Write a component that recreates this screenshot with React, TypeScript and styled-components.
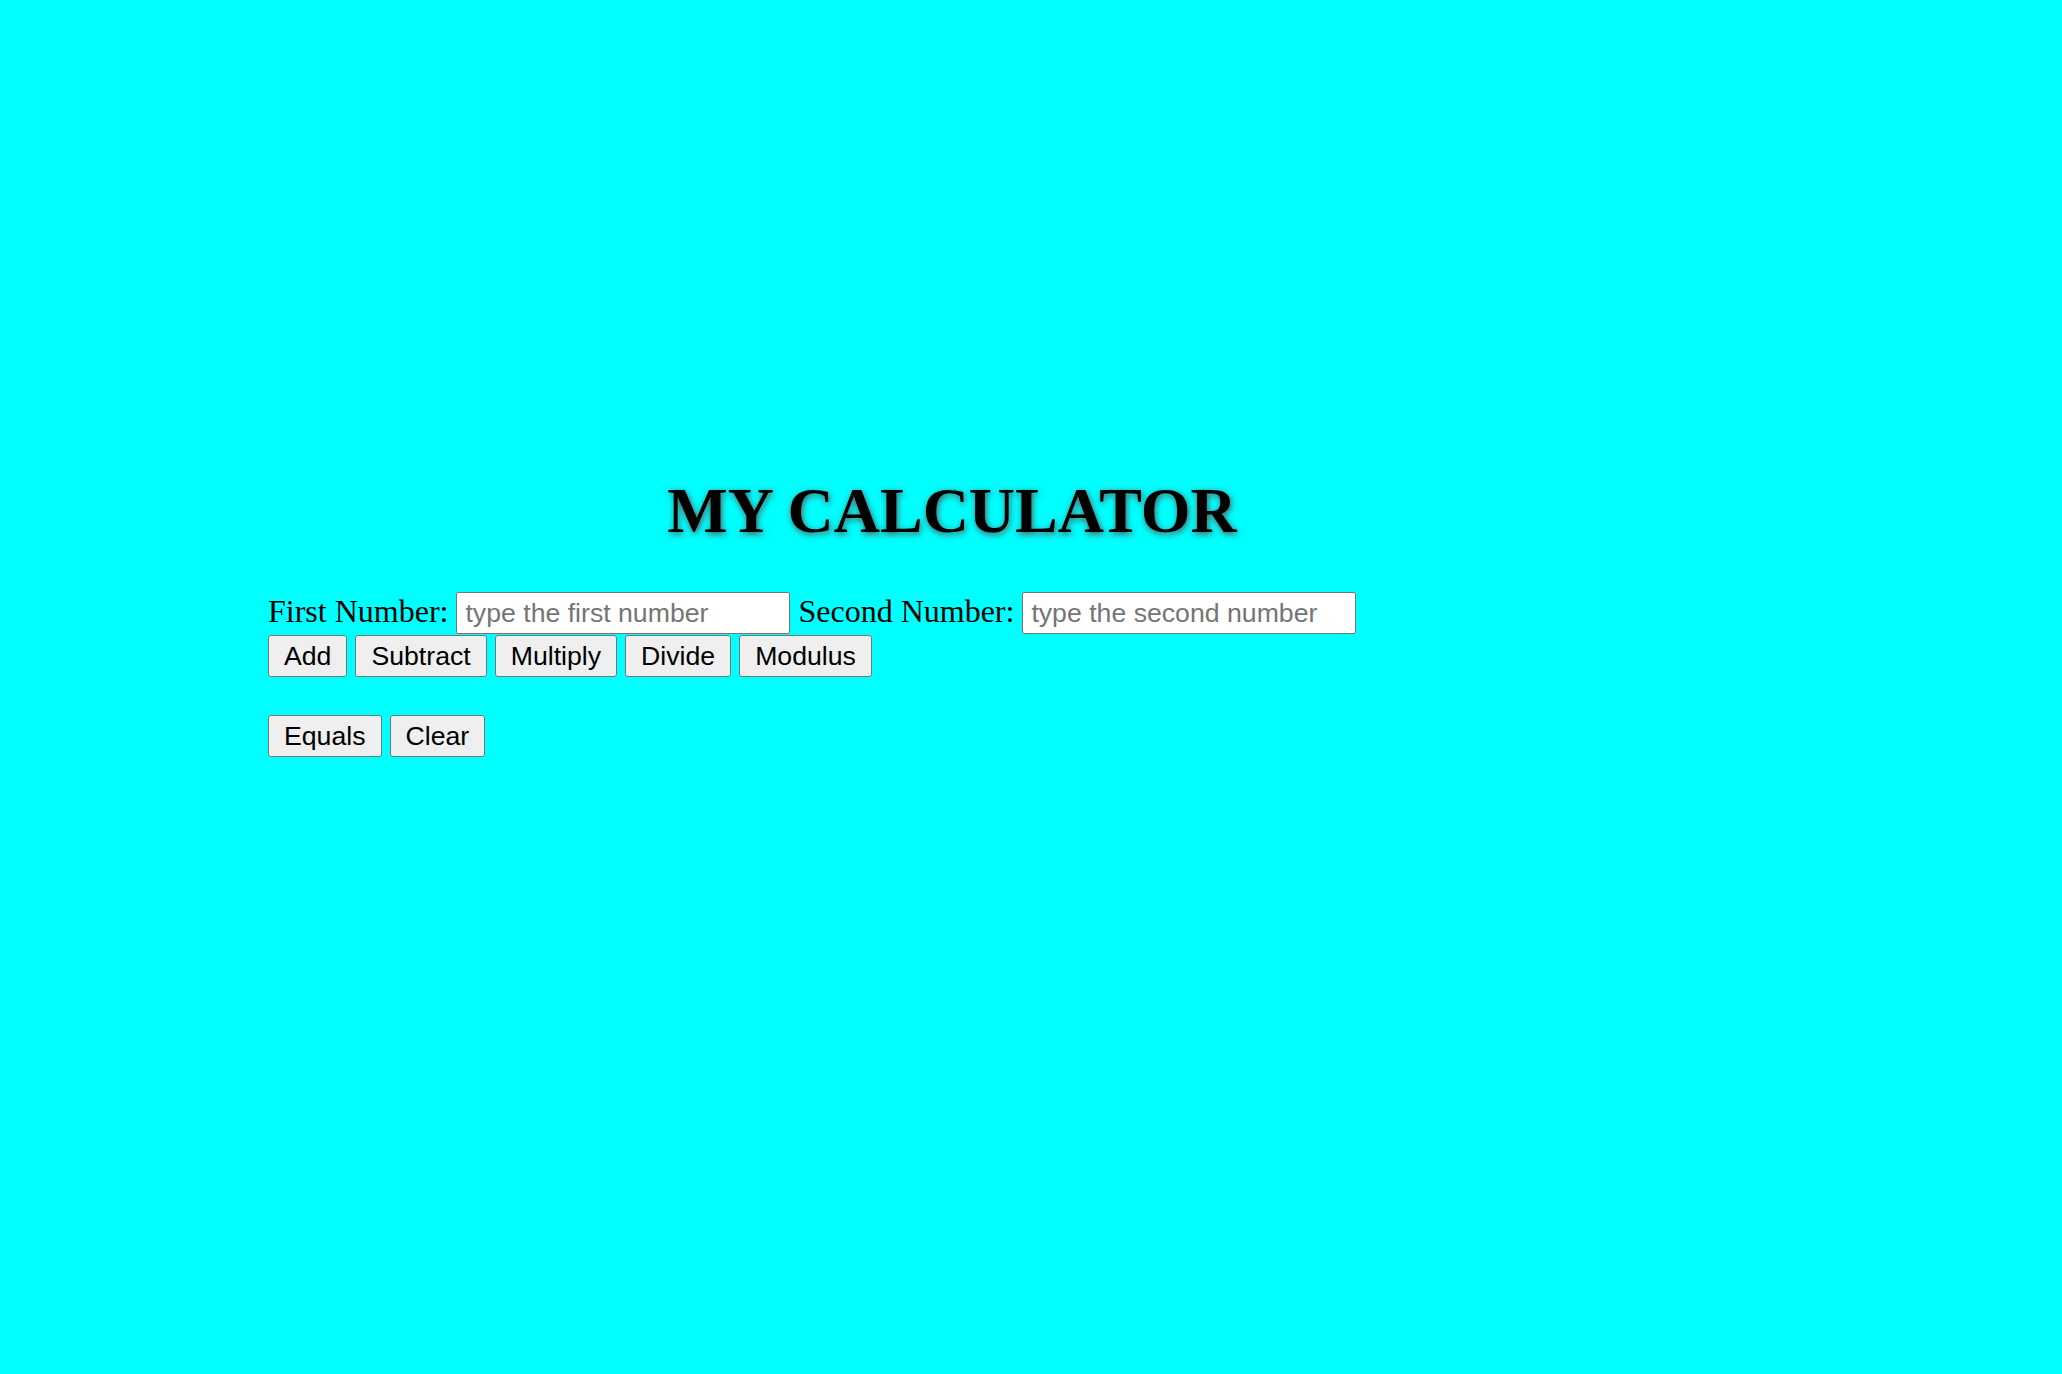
import React from "react";
import styled, { createGlobalStyle } from "styled-components";

const Global = createGlobalStyle`
  html, body {
    margin: 0;
    padding: 0;
    background: #00ffff;
  }
  body {
    font-family: "Liberation Serif", "Times New Roman", serif;
    min-height: 1374px;
  }
`;

const Page = styled.main`
  padding: 474px 0 0 268px;
  width: 1368px;
`;

const Title = styled.h1`
  margin: 0;
  font-family: "Liberation Serif", "Times New Roman", serif;
  font-weight: bold;
  font-size: 64px;
  line-height: 74px;
  text-align: center;
  color: #000;
  text-shadow: 1px 2px 6px #555;
`;

const Row = styled.div<{ $top: number }>`
  display: flex;
  align-items: baseline;
  gap: 8px;
  margin-top: ${(p) => p.$top}px;
`;

const Label = styled.label`
  font-family: "Liberation Serif", "Times New Roman", serif;
  font-size: 32px;
  color: #000;
  white-space: nowrap;
`;

const Input = styled.input`
  box-sizing: border-box;
  width: 334px;
  height: 42px;
  padding: 0 8px;
  border: 1px solid #767676;
  border-radius: 2px;
  background: #fff;
  font-family: "Liberation Sans", Arial, sans-serif;
  font-size: 26.67px;
  color: #000;
  outline: none;
  &::placeholder {
    color: #757575;
  }
`;

const Button = styled.button`
  box-sizing: border-box;
  height: 42px;
  padding: 0 15px;
  border: 1px solid #767676;
  border-radius: 3px;
  background: #efefef;
  font-family: "Liberation Sans", Arial, sans-serif;
  font-size: 26.67px;
  color: #000;
  cursor: pointer;
`;

const ops = ["Add", "Subtract", "Multiply", "Divide", "Modulus"];

export default function App() {
  return (
    <>
      <Global />
      <Page>
        <Title>MY CALCULATOR</Title>
        <Row $top={44}>
          <Label htmlFor="first">First Number:</Label>
          <Input id="first" type="text" placeholder="type the first number" />
          <Label htmlFor="second">Second Number:</Label>
          <Input id="second" type="text" placeholder="type the second number" />
        </Row>
        <Row $top={1}>
          {ops.map((op) => (
            <Button key={op}>{op}</Button>
          ))}
        </Row>
        <Row $top={38}>
          <Button>Equals</Button>
          <Button>Clear</Button>
        </Row>
      </Page>
    </>
  );
}
